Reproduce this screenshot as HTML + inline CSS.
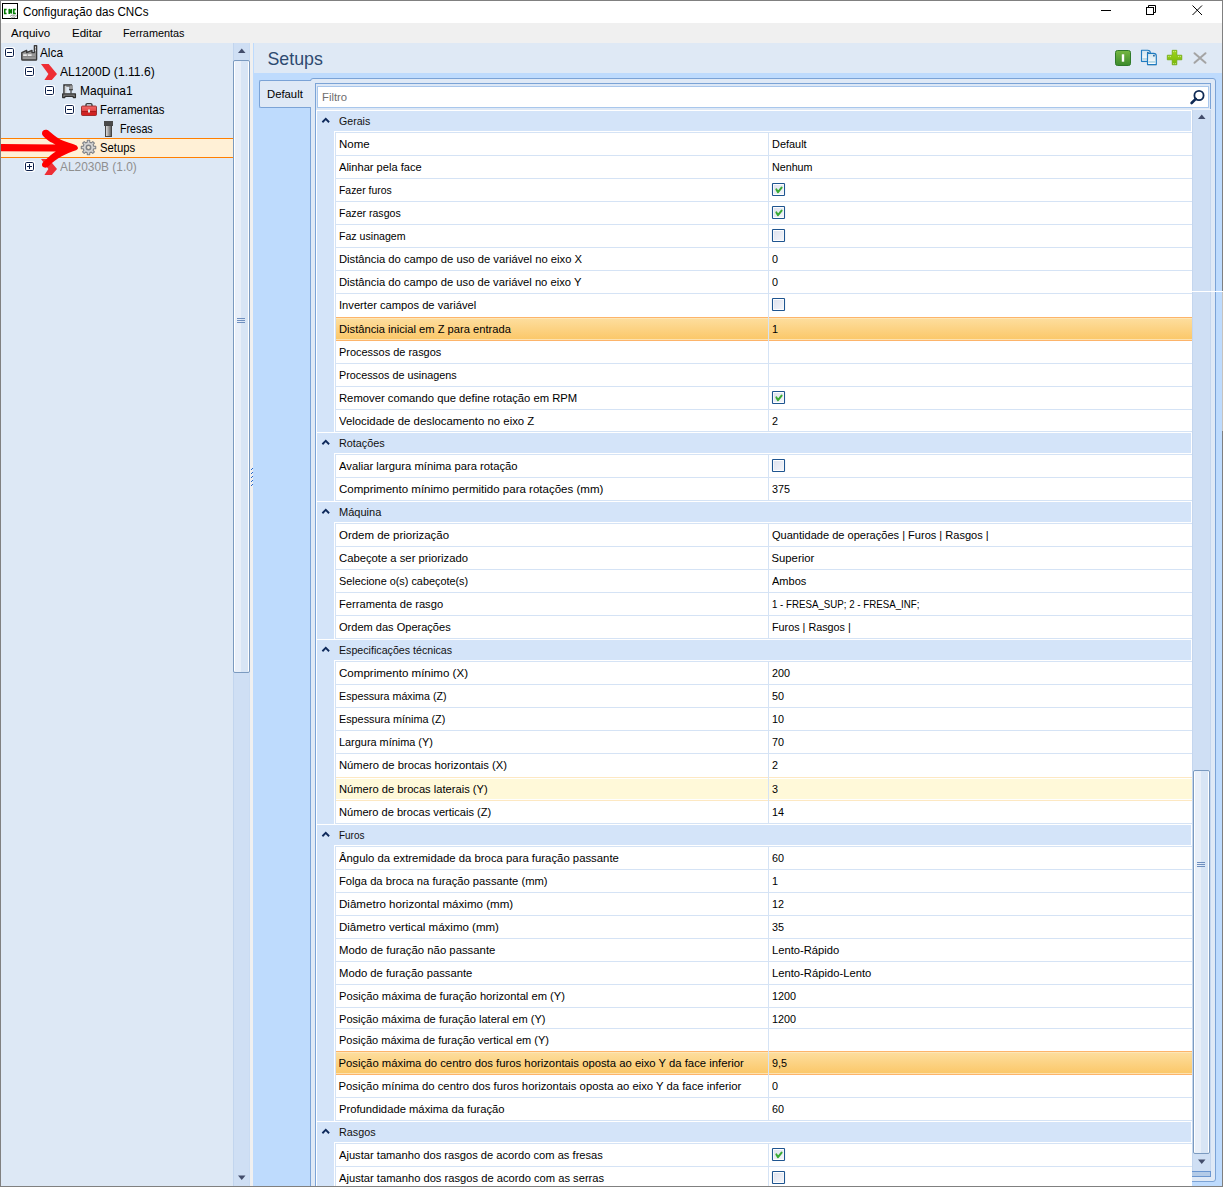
<!DOCTYPE html><html><head><meta charset="utf-8"><title>Configuração das CNCs</title><style>
html,body{margin:0;padding:0;} body{width:1223px;height:1187px;overflow:hidden;position:relative;background:#f0f0f0;font-family:"Liberation Sans", sans-serif;} div{box-sizing:border-box;} svg{position:absolute;overflow:visible}
</style></head><body>
<div style="position:absolute;left:0px;top:0px;width:1223px;height:1187px;background:#808080"></div>
<div style="position:absolute;left:1px;top:1px;width:1221px;height:22px;background:#ffffff"></div>
<div style="position:absolute;left:1px;top:23px;width:1221px;height:20px;background:#f0f0f0"></div>
<div style="position:absolute;left:1px;top:43px;width:232px;height:1143px;background:#dde8f5"></div>
<div style="position:absolute;left:233px;top:43px;width:17px;height:1143px;background:#cfdff4;border-left:1px solid #c2d5ee;border-right:1px solid #c9dbf2"></div>
<div style="position:absolute;left:250px;top:43px;width:3px;height:1143px;background:#f0f0f0"></div>
<div style="position:absolute;left:253px;top:43px;width:969px;height:1143px;background:#bedbfd"></div>
<div style="position:absolute;left:254px;top:43px;width:968px;height:30px;background:#dfe9f5"></div>
<svg style="left:2px;top:3px" width="16" height="16" viewBox="0 0 16 16">
<rect x="0.5" y="0.5" width="15" height="15" fill="#fff" stroke="#000" stroke-width="1"/>
<path d="M4.6 6.6 H2.7 V10.4 H4.6 M7.2 10.9 V6.1 L9.4 10.4 V6.1 M13.8 6.6 H11.8 V10.4 H13.8" fill="none" stroke="#007800" stroke-width="1.5"/>
<path d="M8 13.5 Q10 11 12 12.5 T15 12.5 M9 15 Q11 13 13 14.5" fill="none" stroke="#a0a0a0" stroke-width="1"/>
</svg>
<div style="position:absolute;left:23px;top:5.87px;font-size:12.3px;line-height:13.739px;color:#000;white-space:nowrap;transform:scaleX(0.9461);transform-origin:0 0;">Configuração das CNCs</div>
<svg style="left:1101px;top:10px" width="10" height="1"><rect x="0" y="0" width="10" height="1" fill="#000"/></svg>
<svg style="left:1146px;top:5px" width="11" height="11" viewBox="0 0 11 11">
<rect x="0.5" y="2.5" width="7" height="7" fill="none" stroke="#000"/>
<path d="M2.5 2.5 V0.5 H9.5 V7.5 H7.5" fill="none" stroke="#000"/></svg>
<svg style="left:1192px;top:5px" width="11" height="11" viewBox="0 0 11 11">
<path d="M0.5 0.5 L10 10 M10 0.5 L0.5 10" stroke="#000" stroke-width="1"/></svg>
<div style="position:absolute;left:11px;top:26.77px;font-size:11.3px;line-height:12.622px;color:#000;white-space:nowrap;transform:scaleX(1.0214);transform-origin:0 0;">Arquivo</div>
<div style="position:absolute;left:72px;top:26.77px;font-size:11.3px;line-height:12.622px;color:#000;white-space:nowrap;transform:scaleX(1.0214);transform-origin:0 0;">Editar</div>
<div style="position:absolute;left:123px;top:26.77px;font-size:11.3px;line-height:12.622px;color:#000;white-space:nowrap;transform:scaleX(0.9595);transform-origin:0 0;">Ferramentas</div>
<div style="position:absolute;left:1px;top:138px;width:232px;height:20px;background:#fff0d6;border-top:1px solid #ff7f00;border-bottom:1px solid #ff7f00"></div>
<svg style="left:4px;top:47px" width="11" height="11" viewBox="0 0 11 11">
<rect x="0" y="0" width="11" height="11" rx="2" fill="#ffffff"/>
<rect x="1.5" y="1.5" width="8" height="8" rx="1.2" fill="#ffffff" stroke="#0c1f4a" stroke-width="1"/>
<path d="M3 5.5 H8" stroke="#0c1f4a" stroke-width="1"/>
</svg>
<svg style="left:21px;top:45px" width="17" height="16" viewBox="0 0 17 16">
<path d="M0.8 14.2 V7.6 L5.6 5.4 V7.6 L11 5.4 V7.6 H13.4 V0.6 H15.6 V14.2 Q15.6 15 14.8 15 H1.6 Q0.8 15 0.8 14.2 Z" fill="#999" stroke="#3a3a3a" stroke-width="1.4" stroke-linejoin="round"/>
<rect x="2.2" y="9.4" width="3.6" height="1.4" fill="#fff"/><rect x="6.8" y="9.4" width="3.8" height="1.4" fill="#fff"/>
<rect x="2" y="11.2" width="12" height="1" fill="#808080"/>
<rect x="14.1" y="1.6" width="0.9" height="1.8" fill="#ddd"/><rect x="14.1" y="4.4" width="0.9" height="1.8" fill="#ddd"/>
</svg>
<div style="position:absolute;left:40px;top:46.96px;font-size:12.2px;line-height:13.627px;color:#000;white-space:nowrap;transform:scaleX(0.9683);transform-origin:0 0;">Alca</div>
<svg style="left:24px;top:66px" width="11" height="11" viewBox="0 0 11 11">
<rect x="0" y="0" width="11" height="11" rx="2" fill="#ffffff"/>
<rect x="1.5" y="1.5" width="8" height="8" rx="1.2" fill="#ffffff" stroke="#0c1f4a" stroke-width="1"/>
<path d="M3 5.5 H8" stroke="#0c1f4a" stroke-width="1"/>
</svg>
<svg style="left:41px;top:64px" width="17" height="17" viewBox="0 0 17 17">
<path d="M0 0 H7.7 L16 10 L10.8 16 H3.4 L7.4 10 Z" fill="#ee2e35"/></svg>
<div style="position:absolute;left:60px;top:65.96px;font-size:12.2px;line-height:13.627px;color:#000;white-space:nowrap;transform:scaleX(0.9937);transform-origin:0 0;">AL1200D (1.11.6)</div>
<svg style="left:44px;top:85px" width="11" height="11" viewBox="0 0 11 11">
<rect x="0" y="0" width="11" height="11" rx="2" fill="#ffffff"/>
<rect x="1.5" y="1.5" width="8" height="8" rx="1.2" fill="#ffffff" stroke="#0c1f4a" stroke-width="1"/>
<path d="M3 5.5 H8" stroke="#0c1f4a" stroke-width="1"/>
</svg>
<svg style="left:62px;top:84px" width="15" height="15" viewBox="0 0 15 15">
<path d="M2 9.5 V1 H10" fill="none" stroke="#2f2f2f" stroke-width="1.5"/>
<rect x="2.8" y="1.8" width="1.6" height="7.6" fill="#cfcfcf"/>
<rect x="4.3" y="1.8" width="3.5" height="1.2" fill="#888"/>
<rect x="7.6" y="1.2" width="2.8" height="4.2" fill="#999" stroke="#555" stroke-width="0.4"/>
<path d="M7 5.7 H11 M9 5.7 V9.5" stroke="#2f2f2f" stroke-width="1.1"/>
<path d="M0.7 13.6 V9.9 H13.4 V13.6 H11.4 L10.9 12.3 H3.2 L2.7 13.6 Z" fill="#7f7f7f" stroke="#2f2f2f" stroke-width="1.3" stroke-linejoin="round"/>
</svg>
<div style="position:absolute;left:80px;top:84.96px;font-size:12.2px;line-height:13.627px;color:#000;white-space:nowrap;transform:scaleX(0.9829);transform-origin:0 0;">Maquina1</div>
<svg style="left:64px;top:104px" width="11" height="11" viewBox="0 0 11 11">
<rect x="0" y="0" width="11" height="11" rx="2" fill="#ffffff"/>
<rect x="1.5" y="1.5" width="8" height="8" rx="1.2" fill="#ffffff" stroke="#0c1f4a" stroke-width="1"/>
<path d="M3 5.5 H8" stroke="#0c1f4a" stroke-width="1"/>
</svg>
<svg style="left:81px;top:103px" width="16" height="13" viewBox="0 0 16 13">
<defs><linearGradient id="tbg" x1="0" y1="0" x2="0" y2="1"><stop offset="0" stop-color="#f26a6a"/><stop offset="0.5" stop-color="#e44848"/><stop offset="0.55" stop-color="#a81010"/><stop offset="0.65" stop-color="#c42828"/><stop offset="1" stop-color="#e11a1a"/></linearGradient></defs>
<path d="M5 3.5 V1.8 Q5 0.7 6.2 0.7 H9.8 Q11 0.7 11 1.8 V3.5" fill="none" stroke="#3a3a3a" stroke-width="1.3"/>
<rect x="0.5" y="3" width="15" height="9.5" rx="1" fill="url(#tbg)" stroke="#8a1a1a" stroke-width="0.8"/>
<rect x="7" y="6.5" width="2" height="3" fill="#dfe8e8"/>
</svg>
<div style="position:absolute;left:100px;top:103.96px;font-size:12.2px;line-height:13.627px;color:#000;white-space:nowrap;transform:scaleX(0.9321);transform-origin:0 0;">Ferramentas</div>
<svg style="left:104px;top:121px" width="9" height="16" viewBox="0 0 9 16">
<defs><linearGradient id="frg" x1="0" y1="0" x2="1" y2="0"><stop offset="0" stop-color="#e8e8e8"/><stop offset="1" stop-color="#555"/></linearGradient></defs>
<rect x="0" y="0" width="9" height="5" fill="#4a4a4a"/>
<rect x="1.5" y="4.5" width="6" height="11" fill="url(#frg)" stroke="#444" stroke-width="1"/>
</svg>
<div style="position:absolute;left:120px;top:122.96px;font-size:12.2px;line-height:13.627px;color:#000;white-space:nowrap;transform:scaleX(0.8775);transform-origin:0 0;">Fresas</div>
<svg style="left:81px;top:140px" width="15" height="15" viewBox="0 0 15 15">
<path d="M6.22 2.25 L6.34 0.29 L8.66 0.29 L8.78 2.25 L10.30 2.88 L11.77 1.58 L13.42 3.23 L12.12 4.70 L12.75 6.22 L14.71 6.34 L14.71 8.66 L12.75 8.78 L12.12 10.30 L13.42 11.77 L11.77 13.42 L10.30 12.12 L8.78 12.75 L8.66 14.71 L6.34 14.71 L6.22 12.75 L4.70 12.12 L3.23 13.42 L1.58 11.77 L2.88 10.30 L2.25 8.78 L0.29 8.66 L0.29 6.34 L2.25 6.22 L2.88 4.70 L1.58 3.23 L3.23 1.58 L4.70 2.88 Z" fill="#d4d4d4" stroke="#7f8287" stroke-width="1.1" stroke-linejoin="round"/>
<circle cx="7.5" cy="7.5" r="2.2" fill="#efe7d7" stroke="#808387" stroke-width="1.5"/>
</svg>
<div style="position:absolute;left:100px;top:141.96px;font-size:12.2px;line-height:13.627px;color:#000;white-space:nowrap;transform:scaleX(0.9262);transform-origin:0 0;">Setups</div>
<svg style="left:24px;top:161px" width="11" height="11" viewBox="0 0 11 11">
<rect x="0" y="0" width="11" height="11" rx="2" fill="#ffffff"/>
<rect x="1.5" y="1.5" width="8" height="8" rx="1.2" fill="#ffffff" stroke="#0c1f4a" stroke-width="1"/>
<path d="M3 5.5 H8" stroke="#0c1f4a" stroke-width="1"/><path d="M5.5 3 V8" stroke="#0c1f4a" stroke-width="1"/>
</svg>
<svg style="left:41px;top:159px" width="17" height="17" viewBox="0 0 17 17">
<path d="M0 0 H7.7 L16 10 L10.8 16 H3.4 L7.4 10 Z" fill="#ee2e35"/></svg>
<div style="position:absolute;left:60px;top:160.96px;font-size:12.2px;line-height:13.627px;color:#8f8f8f;white-space:nowrap;transform:scaleX(0.9777);transform-origin:0 0;">AL2030B (1.0)</div>
<svg style="left:0px;top:0px" width="100" height="200" viewBox="0 0 100 200">
<path d="M78 147.9 C77.6 146.3 76.8 145.6 75.9 145.2 C70 142.8 63 141 59.5 139 C55 136.5 52 133.5 49.2 131.2 C46.8 129 42.6 129.3 42.1 132.6 C41.8 134.3 42.3 135.2 43.2 136 C45 138 47 139.8 48.5 140.7 C51 142.3 53.5 143.5 55.5 144.5 L1 143.9 L1 151.3 L55.8 151.5 C52 154 49.5 156.2 47.3 158.3 C45.5 160 44 161.5 42.6 162.8 C41.4 164.2 41.8 166.8 44.3 167.6 C46 168.1 47.5 167.3 48.7 166.1 C52.5 162.5 57 159 61.2 156.6 C66 153.8 71 151.8 76 150.2 C77.3 149.6 77.8 148.9 78 147.9 Z" fill="#ff0000"/>
</svg>
<svg style="left:238px;top:48px" width="8" height="6" viewBox="0 0 8 6"><path d="M0 5 L3.75 0.5 L7.5 5 Z" fill="#434d6b"/></svg>
<div style="position:absolute;left:233px;top:60px;width:17px;height:613px;border:1px solid #7b9abf;border-radius:2px;background:linear-gradient(90deg,#ffffff 0,#ffffff 1px,#e8eff9 1px,#e8eff9 7px,#d8e5f5 7px,#d8e5f5 14px,#ffffff 14px)"></div>
<div style="position:absolute;left:237px;top:318px;width:8px;height:1px;background:#6f8fbf"></div>
<div style="position:absolute;left:237px;top:320px;width:8px;height:1px;background:#6f8fbf"></div>
<div style="position:absolute;left:237px;top:322px;width:8px;height:1px;background:#6f8fbf"></div>
<svg style="left:238px;top:1175px" width="8" height="6" viewBox="0 0 8 6"><path d="M0 0.5 L3.75 5 L7.5 0.5 Z" fill="#434d6b"/></svg>
<div style="position:absolute;left:252px;top:468px;width:1px;height:1px;background:#2266cc"></div>
<div style="position:absolute;left:251px;top:469px;width:1px;height:1px;background:#2266cc"></div>
<div style="position:absolute;left:252px;top:472px;width:1px;height:1px;background:#2266cc"></div>
<div style="position:absolute;left:251px;top:473px;width:1px;height:1px;background:#2266cc"></div>
<div style="position:absolute;left:252px;top:476px;width:1px;height:1px;background:#2266cc"></div>
<div style="position:absolute;left:251px;top:477px;width:1px;height:1px;background:#2266cc"></div>
<div style="position:absolute;left:252px;top:480px;width:1px;height:1px;background:#2266cc"></div>
<div style="position:absolute;left:251px;top:481px;width:1px;height:1px;background:#2266cc"></div>
<div style="position:absolute;left:252px;top:484px;width:1px;height:1px;background:#2266cc"></div>
<div style="position:absolute;left:251px;top:485px;width:1px;height:1px;background:#2266cc"></div>
<svg style="left:1115px;top:50px" width="16" height="16" viewBox="0 0 16 16">
<defs><linearGradient id="gbtn" x1="0" y1="0" x2="0" y2="1"><stop offset="0" stop-color="#76b843"/><stop offset="1" stop-color="#3b8a2c"/></linearGradient></defs>
<rect x="0.5" y="0.5" width="15" height="15" rx="2" fill="url(#gbtn)" stroke="#2f7a2a" stroke-width="1"/>
<rect x="6.8" y="4.3" width="2.4" height="7.4" fill="#ffffff"/></svg>
<svg style="left:1140px;top:49px" width="18" height="18" viewBox="0 0 18 18">
<defs><linearGradient id="cpg" x1="0" y1="0" x2="0" y2="1"><stop offset="0" stop-color="#cfe4ee"/><stop offset="1" stop-color="#ffffff"/></linearGradient></defs>
<path d="M1.5 12.8 V1.2 H7.6 Q10.3 1.2 10.3 3.9 V12.8 Z" fill="#bbb" opacity="0.35" transform="translate(0.4,0.7)"/>
<path d="M1.5 12.3 V1.2 H7.6 Q10.3 1.2 10.3 3.9 V12.3 Z" fill="url(#cpg)" stroke="#1f7bc0" stroke-width="1.15" stroke-linejoin="round"/>
<rect x="2.3" y="9.2" width="7.2" height="1.5" fill="#a9d1e2"/>
<circle cx="7.9" cy="3.6" r="0.9" fill="#1f5f9a"/>
<path d="M7.5 16.3 V4.3 H13.6 Q16.3 4.3 16.3 7 V16.3 Z" fill="#bbb" opacity="0.35" transform="translate(0.3,0.6)"/>
<path d="M7.5 15.6 V4.3 H13.6 Q16.3 4.3 16.3 7 V15.6 Z" fill="url(#cpg)" stroke="#1f7bc0" stroke-width="1.15" stroke-linejoin="round"/>
<rect x="8.3" y="12.2" width="7.2" height="1.5" fill="#a9d1e2"/>
<circle cx="13.9" cy="6.7" r="0.9" fill="#1f5f9a"/>
</svg>
<svg style="left:1167px;top:50px" width="16" height="16" viewBox="0 0 16 16">
<defs><linearGradient id="plg" x1="0" y1="0" x2="0" y2="1"><stop offset="0" stop-color="#9fd41a"/><stop offset="1" stop-color="#78b80a"/></linearGradient></defs>
<path d="M5.2 0.3 H9.8 V5.2 H14.8 V9.8 H9.8 V14.8 H5.2 V9.8 H0.3 V5.2 H5.2 Z" fill="url(#plg)" stroke="#6aa60a" stroke-width="0.7" stroke-linejoin="round"/>
<path d="M6.2 1.6 H8.8 M6.2 13.6 H8.8" stroke="#e4f7b8" stroke-width="0.8" stroke-dasharray="1 0.8"/>
<path d="M1.3 6.6 H4 M11 6.6 H13.8" stroke="#e4f7b8" stroke-width="0.8" stroke-dasharray="1 0.8"/>
</svg>
<svg style="left:1193px;top:52px" width="14" height="12" viewBox="0 0 14 12">
<path d="M1.5 1.2 L12.5 10.8 M12.5 1.2 L1.5 10.8" stroke="#a4a4a4" stroke-width="2" stroke-linecap="round"/></svg>
<div style="position:absolute;left:267.5px;top:49.89px;font-size:17.8px;line-height:19.883px;color:#2e4a70;white-space:nowrap;">Setups</div>
<div style="position:absolute;left:310px;top:78px;width:906px;height:1104px;background:#dfe9f6;border:1px solid #7ba3d6;border-radius:3px 3px 3px 0"></div>
<div style="position:absolute;left:310px;top:1170px;width:6px;height:16px;background:#dfe9f6;border-left:1px solid #7ba3d6"></div>
<div style="position:absolute;left:259px;top:80px;width:52px;height:28px;background:#dfe9f6;border:1px solid #7ba3d6;border-right:none;border-radius:2px 0 0 2px"></div>
<div style="position:absolute;left:310px;top:81px;width:2px;height:26px;background:#dfe9f6"></div>
<div style="position:absolute;left:267px;top:87.77px;font-size:11.3px;line-height:12.622px;color:#000;white-space:nowrap;">Default</div>
<div style="position:absolute;left:315px;top:83px;width:896px;height:26px;border:1px solid #7ba3d6;border-bottom:none;background:#dde8f6"></div>
<div style="position:absolute;left:315px;top:83px;width:1px;height:1103px;background:#7ba3d6"></div>
<div style="position:absolute;left:317px;top:86px;width:892px;height:22px;background:#fff;border:1px solid #a9c7ec"></div>
<div style="position:absolute;left:322px;top:90.77px;font-size:11.3px;line-height:12.622px;color:#6e6e6e;white-space:nowrap;">Filtro</div>
<svg style="left:1189px;top:89px" width="17" height="17" viewBox="0 0 17 17">
<circle cx="10" cy="6.5" r="4.6" fill="none" stroke="#0f2a55" stroke-width="1.8"/>
<path d="M6.8 9.8 L2.6 14" stroke="#0f2a55" stroke-width="2.6" stroke-linecap="round"/></svg>
<div style="position:absolute;left:316px;top:110px;width:876px;height:1076px;background:#ffffff"></div>
<div style="position:absolute;left:317px;top:110px;width:17px;height:1076px;background:#d4e4f9"></div>
<div style="position:absolute;left:316px;top:110px;width:876px;height:1px;background:#ffffff"></div>
<div style="position:absolute;left:317px;top:111px;width:874px;height:20px;background:#d4e4f9"></div>
<svg style="left:322px;top:117px" width="8" height="6" viewBox="0 0 8 6"><path d="M0.4 5.2 L3.75 1.9 L7.1 5.2" fill="none" stroke="#0f2a5c" stroke-width="1.9" stroke-linecap="butt" stroke-linejoin="miter"/></svg>
<div style="position:absolute;left:338.5px;top:114.77px;font-size:11.3px;line-height:12.622px;color:#111;white-space:nowrap;transform:scaleX(0.9387);transform-origin:0 0;">Gerais</div>
<div style="position:absolute;left:335px;top:132px;width:857px;height:1px;background:#d5e3f5"></div>
<div style="position:absolute;left:335px;top:132px;width:1px;height:24px;background:#d5e3f5"></div>
<div style="position:absolute;left:768px;top:132px;width:1px;height:23px;background:#d5e3f5"></div>
<div style="position:absolute;left:338.5px;top:137.77px;font-size:11.3px;line-height:12.622px;color:#000;white-space:nowrap;transform:scaleX(1.0170);transform-origin:0 0;">Nome</div>
<div style="position:absolute;left:771.5px;top:137.77px;font-size:11.3px;line-height:12.622px;color:#000;white-space:nowrap;transform:scaleX(0.9666);transform-origin:0 0;">Default</div>
<div style="position:absolute;left:335px;top:155px;width:857px;height:1px;background:#d5e3f5"></div>
<div style="position:absolute;left:335px;top:155px;width:1px;height:24px;background:#d5e3f5"></div>
<div style="position:absolute;left:768px;top:155px;width:1px;height:23px;background:#d5e3f5"></div>
<div style="position:absolute;left:338.5px;top:160.77px;font-size:11.3px;line-height:12.622px;color:#000;white-space:nowrap;transform:scaleX(0.9820);transform-origin:0 0;">Alinhar pela face</div>
<div style="position:absolute;left:771.5px;top:160.77px;font-size:11.3px;line-height:12.622px;color:#000;white-space:nowrap;transform:scaleX(0.9479);transform-origin:0 0;">Nenhum</div>
<div style="position:absolute;left:335px;top:178px;width:857px;height:1px;background:#d5e3f5"></div>
<div style="position:absolute;left:335px;top:178px;width:1px;height:24px;background:#d5e3f5"></div>
<div style="position:absolute;left:768px;top:178px;width:1px;height:23px;background:#d5e3f5"></div>
<div style="position:absolute;left:338.5px;top:183.77px;font-size:11.3px;line-height:12.622px;color:#000;white-space:nowrap;transform:scaleX(0.9223);transform-origin:0 0;">Fazer furos</div>
<svg style="left:772px;top:183px" width="13" height="13" viewBox="0 0 13 13">
<defs><linearGradient id="cbg772183" x1="0" y1="0" x2="1" y2="1"><stop offset="0" stop-color="#dfe3ee"/><stop offset="1" stop-color="#f3f4f9"/></linearGradient></defs>
<rect x="0.5" y="0.5" width="12" height="12" rx="0.6" fill="#ffffff" stroke="#1f5590" stroke-width="1.1"/>
<rect x="2" y="2" width="9" height="9" fill="url(#cbg772183)"/>
<path d="M4.4 6.4 L6 9.2 L9.6 4.6" fill="none" stroke="#3aaa35" stroke-width="2" stroke-linecap="round" stroke-linejoin="round"/></svg>
<div style="position:absolute;left:335px;top:201px;width:857px;height:1px;background:#d5e3f5"></div>
<div style="position:absolute;left:335px;top:201px;width:1px;height:24px;background:#d5e3f5"></div>
<div style="position:absolute;left:768px;top:201px;width:1px;height:23px;background:#d5e3f5"></div>
<div style="position:absolute;left:338.5px;top:206.77px;font-size:11.3px;line-height:12.622px;color:#000;white-space:nowrap;transform:scaleX(0.9360);transform-origin:0 0;">Fazer rasgos</div>
<svg style="left:772px;top:206px" width="13" height="13" viewBox="0 0 13 13">
<defs><linearGradient id="cbg772206" x1="0" y1="0" x2="1" y2="1"><stop offset="0" stop-color="#dfe3ee"/><stop offset="1" stop-color="#f3f4f9"/></linearGradient></defs>
<rect x="0.5" y="0.5" width="12" height="12" rx="0.6" fill="#ffffff" stroke="#1f5590" stroke-width="1.1"/>
<rect x="2" y="2" width="9" height="9" fill="url(#cbg772206)"/>
<path d="M4.4 6.4 L6 9.2 L9.6 4.6" fill="none" stroke="#3aaa35" stroke-width="2" stroke-linecap="round" stroke-linejoin="round"/></svg>
<div style="position:absolute;left:335px;top:224px;width:857px;height:1px;background:#d5e3f5"></div>
<div style="position:absolute;left:335px;top:224px;width:1px;height:24px;background:#d5e3f5"></div>
<div style="position:absolute;left:768px;top:224px;width:1px;height:23px;background:#d5e3f5"></div>
<div style="position:absolute;left:338.5px;top:229.77px;font-size:11.3px;line-height:12.622px;color:#000;white-space:nowrap;transform:scaleX(0.9377);transform-origin:0 0;">Faz usinagem</div>
<svg style="left:772px;top:229px" width="13" height="13" viewBox="0 0 13 13">
<defs><linearGradient id="cbg772229" x1="0" y1="0" x2="1" y2="1"><stop offset="0" stop-color="#dfe3ee"/><stop offset="1" stop-color="#f3f4f9"/></linearGradient></defs>
<rect x="0.5" y="0.5" width="12" height="12" rx="0.6" fill="#ffffff" stroke="#1f5590" stroke-width="1.1"/>
<rect x="2" y="2" width="9" height="9" fill="url(#cbg772229)"/>
</svg>
<div style="position:absolute;left:335px;top:247px;width:857px;height:1px;background:#d5e3f5"></div>
<div style="position:absolute;left:335px;top:247px;width:1px;height:24px;background:#d5e3f5"></div>
<div style="position:absolute;left:768px;top:247px;width:1px;height:23px;background:#d5e3f5"></div>
<div style="position:absolute;left:338.5px;top:252.77px;font-size:11.3px;line-height:12.622px;color:#000;white-space:nowrap;transform:scaleX(0.9951);transform-origin:0 0;">Distância do campo de uso de variável no eixo X</div>
<div style="position:absolute;left:771.5px;top:252.77px;font-size:11.3px;line-height:12.622px;color:#000;white-space:nowrap;transform:scaleX(0.9550);transform-origin:0 0;">0</div>
<div style="position:absolute;left:335px;top:270px;width:857px;height:1px;background:#d5e3f5"></div>
<div style="position:absolute;left:335px;top:270px;width:1px;height:24px;background:#d5e3f5"></div>
<div style="position:absolute;left:768px;top:270px;width:1px;height:23px;background:#d5e3f5"></div>
<div style="position:absolute;left:338.5px;top:275.77px;font-size:11.3px;line-height:12.622px;color:#000;white-space:nowrap;transform:scaleX(0.9934);transform-origin:0 0;">Distância do campo de uso de variável no eixo Y</div>
<div style="position:absolute;left:771.5px;top:275.77px;font-size:11.3px;line-height:12.622px;color:#000;white-space:nowrap;transform:scaleX(0.9550);transform-origin:0 0;">0</div>
<div style="position:absolute;left:335px;top:293px;width:857px;height:1px;background:#d5e3f5"></div>
<div style="position:absolute;left:335px;top:293px;width:1px;height:25px;background:#d5e3f5"></div>
<div style="position:absolute;left:768px;top:293px;width:1px;height:24px;background:#d5e3f5"></div>
<div style="position:absolute;left:338.5px;top:298.77px;font-size:11.3px;line-height:12.622px;color:#000;white-space:nowrap;transform:scaleX(0.9884);transform-origin:0 0;">Inverter campos de variável</div>
<svg style="left:772px;top:298px" width="13" height="13" viewBox="0 0 13 13">
<defs><linearGradient id="cbg772298" x1="0" y1="0" x2="1" y2="1"><stop offset="0" stop-color="#dfe3ee"/><stop offset="1" stop-color="#f3f4f9"/></linearGradient></defs>
<rect x="0.5" y="0.5" width="12" height="12" rx="0.6" fill="#ffffff" stroke="#1f5590" stroke-width="1.1"/>
<rect x="2" y="2" width="9" height="9" fill="url(#cbg772298)"/>
</svg>
<div style="position:absolute;left:336px;top:317px;width:856px;height:24px;background:linear-gradient(#fdb46a 0,#fdb46a 1px,#fde6b6 1px,#fde6b6 2px,#fddd9c 2px,#fbc86a calc(100% - 2px),#fde2b0 calc(100% - 2px),#fde2b0 calc(100% - 1px),#fdb46a calc(100% - 1px))"></div>
<div style="position:absolute;left:335px;top:317px;width:1px;height:24px;background:#d5e3f5"></div>
<div style="position:absolute;left:768px;top:317px;width:1px;height:23px;background:#d5e3f5"></div>
<div style="position:absolute;left:338.5px;top:322.77px;font-size:11.3px;line-height:12.622px;color:#000;white-space:nowrap;transform:scaleX(0.9885);transform-origin:0 0;">Distância inicial em Z para entrada</div>
<div style="position:absolute;left:771.5px;top:322.77px;font-size:11.3px;line-height:12.622px;color:#000;white-space:nowrap;transform:scaleX(0.9550);transform-origin:0 0;">1</div>
<div style="position:absolute;left:335px;top:340px;width:1px;height:24px;background:#d5e3f5"></div>
<div style="position:absolute;left:768px;top:340px;width:1px;height:23px;background:#d5e3f5"></div>
<div style="position:absolute;left:338.5px;top:345.77px;font-size:11.3px;line-height:12.622px;color:#000;white-space:nowrap;transform:scaleX(0.9694);transform-origin:0 0;">Processos de rasgos</div>
<div style="position:absolute;left:335px;top:363px;width:857px;height:1px;background:#d5e3f5"></div>
<div style="position:absolute;left:335px;top:363px;width:1px;height:24px;background:#d5e3f5"></div>
<div style="position:absolute;left:768px;top:363px;width:1px;height:23px;background:#d5e3f5"></div>
<div style="position:absolute;left:338.5px;top:368.77px;font-size:11.3px;line-height:12.622px;color:#000;white-space:nowrap;transform:scaleX(0.9560);transform-origin:0 0;">Processos de usinagens</div>
<div style="position:absolute;left:335px;top:386px;width:857px;height:1px;background:#d5e3f5"></div>
<div style="position:absolute;left:335px;top:386px;width:1px;height:24px;background:#d5e3f5"></div>
<div style="position:absolute;left:768px;top:386px;width:1px;height:23px;background:#d5e3f5"></div>
<div style="position:absolute;left:338.5px;top:391.77px;font-size:11.3px;line-height:12.622px;color:#000;white-space:nowrap;transform:scaleX(0.9958);transform-origin:0 0;">Remover comando que define rotação em RPM</div>
<svg style="left:772px;top:391px" width="13" height="13" viewBox="0 0 13 13">
<defs><linearGradient id="cbg772391" x1="0" y1="0" x2="1" y2="1"><stop offset="0" stop-color="#dfe3ee"/><stop offset="1" stop-color="#f3f4f9"/></linearGradient></defs>
<rect x="0.5" y="0.5" width="12" height="12" rx="0.6" fill="#ffffff" stroke="#1f5590" stroke-width="1.1"/>
<rect x="2" y="2" width="9" height="9" fill="url(#cbg772391)"/>
<path d="M4.4 6.4 L6 9.2 L9.6 4.6" fill="none" stroke="#3aaa35" stroke-width="2" stroke-linecap="round" stroke-linejoin="round"/></svg>
<div style="position:absolute;left:335px;top:409px;width:857px;height:1px;background:#d5e3f5"></div>
<div style="position:absolute;left:335px;top:409px;width:1px;height:23px;background:#d5e3f5"></div>
<div style="position:absolute;left:768px;top:409px;width:1px;height:22px;background:#d5e3f5"></div>
<div style="position:absolute;left:338.5px;top:414.77px;font-size:11.3px;line-height:12.622px;color:#000;white-space:nowrap;transform:scaleX(1.0062);transform-origin:0 0;">Velocidade de deslocamento no eixo Z</div>
<div style="position:absolute;left:771.5px;top:414.77px;font-size:11.3px;line-height:12.622px;color:#000;white-space:nowrap;transform:scaleX(0.9550);transform-origin:0 0;">2</div>
<div style="position:absolute;left:335px;top:431px;width:857px;height:1px;background:#d5e3f5"></div>
<div style="position:absolute;left:316px;top:432px;width:876px;height:1px;background:#ffffff"></div>
<div style="position:absolute;left:317px;top:433px;width:874px;height:20px;background:#d4e4f9"></div>
<svg style="left:322px;top:439px" width="8" height="6" viewBox="0 0 8 6"><path d="M0.4 5.2 L3.75 1.9 L7.1 5.2" fill="none" stroke="#0f2a5c" stroke-width="1.9" stroke-linecap="butt" stroke-linejoin="miter"/></svg>
<div style="position:absolute;left:338.5px;top:436.77px;font-size:11.3px;line-height:12.622px;color:#111;white-space:nowrap;transform:scaleX(0.9580);transform-origin:0 0;">Rotações</div>
<div style="position:absolute;left:335px;top:454px;width:857px;height:1px;background:#d5e3f5"></div>
<div style="position:absolute;left:335px;top:454px;width:1px;height:24px;background:#d5e3f5"></div>
<div style="position:absolute;left:768px;top:454px;width:1px;height:23px;background:#d5e3f5"></div>
<div style="position:absolute;left:338.5px;top:459.77px;font-size:11.3px;line-height:12.622px;color:#000;white-space:nowrap;transform:scaleX(0.9956);transform-origin:0 0;">Avaliar largura mínima para rotação</div>
<svg style="left:772px;top:459px" width="13" height="13" viewBox="0 0 13 13">
<defs><linearGradient id="cbg772459" x1="0" y1="0" x2="1" y2="1"><stop offset="0" stop-color="#dfe3ee"/><stop offset="1" stop-color="#f3f4f9"/></linearGradient></defs>
<rect x="0.5" y="0.5" width="12" height="12" rx="0.6" fill="#ffffff" stroke="#1f5590" stroke-width="1.1"/>
<rect x="2" y="2" width="9" height="9" fill="url(#cbg772459)"/>
</svg>
<div style="position:absolute;left:335px;top:477px;width:857px;height:1px;background:#d5e3f5"></div>
<div style="position:absolute;left:335px;top:477px;width:1px;height:24px;background:#d5e3f5"></div>
<div style="position:absolute;left:768px;top:477px;width:1px;height:23px;background:#d5e3f5"></div>
<div style="position:absolute;left:338.5px;top:482.77px;font-size:11.3px;line-height:12.622px;color:#000;white-space:nowrap;transform:scaleX(1.0194);transform-origin:0 0;">Comprimento mínimo permitido para rotações (mm)</div>
<div style="position:absolute;left:771.5px;top:482.77px;font-size:11.3px;line-height:12.622px;color:#000;white-space:nowrap;transform:scaleX(0.9550);transform-origin:0 0;">375</div>
<div style="position:absolute;left:335px;top:500px;width:857px;height:1px;background:#d5e3f5"></div>
<div style="position:absolute;left:316px;top:501px;width:876px;height:1px;background:#ffffff"></div>
<div style="position:absolute;left:317px;top:502px;width:874px;height:20px;background:#d4e4f9"></div>
<svg style="left:322px;top:508px" width="8" height="6" viewBox="0 0 8 6"><path d="M0.4 5.2 L3.75 1.9 L7.1 5.2" fill="none" stroke="#0f2a5c" stroke-width="1.9" stroke-linecap="butt" stroke-linejoin="miter"/></svg>
<div style="position:absolute;left:338.5px;top:505.77px;font-size:11.3px;line-height:12.622px;color:#111;white-space:nowrap;transform:scaleX(0.9771);transform-origin:0 0;">Máquina</div>
<div style="position:absolute;left:335px;top:523px;width:857px;height:1px;background:#d5e3f5"></div>
<div style="position:absolute;left:335px;top:523px;width:1px;height:24px;background:#d5e3f5"></div>
<div style="position:absolute;left:768px;top:523px;width:1px;height:23px;background:#d5e3f5"></div>
<div style="position:absolute;left:338.5px;top:528.77px;font-size:11.3px;line-height:12.622px;color:#000;white-space:nowrap;transform:scaleX(1.0129);transform-origin:0 0;">Ordem de priorização</div>
<div style="position:absolute;left:771.5px;top:528.77px;font-size:11.3px;line-height:12.622px;color:#000;white-space:nowrap;transform:scaleX(0.9773);transform-origin:0 0;">Quantidade de operações | Furos | Rasgos |</div>
<div style="position:absolute;left:335px;top:546px;width:857px;height:1px;background:#d5e3f5"></div>
<div style="position:absolute;left:335px;top:546px;width:1px;height:24px;background:#d5e3f5"></div>
<div style="position:absolute;left:768px;top:546px;width:1px;height:23px;background:#d5e3f5"></div>
<div style="position:absolute;left:338.5px;top:551.77px;font-size:11.3px;line-height:12.622px;color:#000;white-space:nowrap;transform:scaleX(0.9970);transform-origin:0 0;">Cabeçote a ser priorizado</div>
<div style="position:absolute;left:771.5px;top:551.77px;font-size:11.3px;line-height:12.622px;color:#000;white-space:nowrap;">Superior</div>
<div style="position:absolute;left:335px;top:569px;width:857px;height:1px;background:#d5e3f5"></div>
<div style="position:absolute;left:335px;top:569px;width:1px;height:24px;background:#d5e3f5"></div>
<div style="position:absolute;left:768px;top:569px;width:1px;height:23px;background:#d5e3f5"></div>
<div style="position:absolute;left:338.5px;top:574.77px;font-size:11.3px;line-height:12.622px;color:#000;white-space:nowrap;transform:scaleX(0.9610);transform-origin:0 0;">Selecione o(s) cabeçote(s)</div>
<div style="position:absolute;left:771.5px;top:574.77px;font-size:11.3px;line-height:12.622px;color:#000;white-space:nowrap;transform:scaleX(0.9777);transform-origin:0 0;">Ambos</div>
<div style="position:absolute;left:335px;top:592px;width:857px;height:1px;background:#d5e3f5"></div>
<div style="position:absolute;left:335px;top:592px;width:1px;height:24px;background:#d5e3f5"></div>
<div style="position:absolute;left:768px;top:592px;width:1px;height:23px;background:#d5e3f5"></div>
<div style="position:absolute;left:338.5px;top:597.77px;font-size:11.3px;line-height:12.622px;color:#000;white-space:nowrap;transform:scaleX(0.9867);transform-origin:0 0;">Ferramenta de rasgo</div>
<div style="position:absolute;left:771.5px;top:597.77px;font-size:11.3px;line-height:12.622px;color:#000;white-space:nowrap;transform:scaleX(0.8604);transform-origin:0 0;">1 - FRESA_SUP; 2 - FRESA_INF;</div>
<div style="position:absolute;left:335px;top:615px;width:857px;height:1px;background:#d5e3f5"></div>
<div style="position:absolute;left:335px;top:615px;width:1px;height:24px;background:#d5e3f5"></div>
<div style="position:absolute;left:768px;top:615px;width:1px;height:23px;background:#d5e3f5"></div>
<div style="position:absolute;left:338.5px;top:620.77px;font-size:11.3px;line-height:12.622px;color:#000;white-space:nowrap;transform:scaleX(0.9772);transform-origin:0 0;">Ordem das Operações</div>
<div style="position:absolute;left:771.5px;top:620.77px;font-size:11.3px;line-height:12.622px;color:#000;white-space:nowrap;transform:scaleX(0.9559);transform-origin:0 0;">Furos | Rasgos |</div>
<div style="position:absolute;left:335px;top:638px;width:857px;height:1px;background:#d5e3f5"></div>
<div style="position:absolute;left:316px;top:639px;width:876px;height:1px;background:#ffffff"></div>
<div style="position:absolute;left:317px;top:640px;width:874px;height:20px;background:#d4e4f9"></div>
<svg style="left:322px;top:646px" width="8" height="6" viewBox="0 0 8 6"><path d="M0.4 5.2 L3.75 1.9 L7.1 5.2" fill="none" stroke="#0f2a5c" stroke-width="1.9" stroke-linecap="butt" stroke-linejoin="miter"/></svg>
<div style="position:absolute;left:338.5px;top:643.77px;font-size:11.3px;line-height:12.622px;color:#111;white-space:nowrap;transform:scaleX(0.9432);transform-origin:0 0;">Especificações técnicas</div>
<div style="position:absolute;left:335px;top:661px;width:857px;height:1px;background:#d5e3f5"></div>
<div style="position:absolute;left:335px;top:661px;width:1px;height:24px;background:#d5e3f5"></div>
<div style="position:absolute;left:768px;top:661px;width:1px;height:23px;background:#d5e3f5"></div>
<div style="position:absolute;left:338.5px;top:666.77px;font-size:11.3px;line-height:12.622px;color:#000;white-space:nowrap;transform:scaleX(1.0223);transform-origin:0 0;">Comprimento mínimo (X)</div>
<div style="position:absolute;left:771.5px;top:666.77px;font-size:11.3px;line-height:12.622px;color:#000;white-space:nowrap;transform:scaleX(0.9550);transform-origin:0 0;">200</div>
<div style="position:absolute;left:335px;top:684px;width:857px;height:1px;background:#d5e3f5"></div>
<div style="position:absolute;left:335px;top:684px;width:1px;height:24px;background:#d5e3f5"></div>
<div style="position:absolute;left:768px;top:684px;width:1px;height:23px;background:#d5e3f5"></div>
<div style="position:absolute;left:338.5px;top:689.77px;font-size:11.3px;line-height:12.622px;color:#000;white-space:nowrap;transform:scaleX(0.9467);transform-origin:0 0;">Espessura máxima (Z)</div>
<div style="position:absolute;left:771.5px;top:689.77px;font-size:11.3px;line-height:12.622px;color:#000;white-space:nowrap;transform:scaleX(0.9550);transform-origin:0 0;">50</div>
<div style="position:absolute;left:335px;top:707px;width:857px;height:1px;background:#d5e3f5"></div>
<div style="position:absolute;left:335px;top:707px;width:1px;height:24px;background:#d5e3f5"></div>
<div style="position:absolute;left:768px;top:707px;width:1px;height:23px;background:#d5e3f5"></div>
<div style="position:absolute;left:338.5px;top:712.77px;font-size:11.3px;line-height:12.622px;color:#000;white-space:nowrap;transform:scaleX(0.9566);transform-origin:0 0;">Espessura mínima (Z)</div>
<div style="position:absolute;left:771.5px;top:712.77px;font-size:11.3px;line-height:12.622px;color:#000;white-space:nowrap;transform:scaleX(0.9550);transform-origin:0 0;">10</div>
<div style="position:absolute;left:335px;top:730px;width:857px;height:1px;background:#d5e3f5"></div>
<div style="position:absolute;left:335px;top:730px;width:1px;height:24px;background:#d5e3f5"></div>
<div style="position:absolute;left:768px;top:730px;width:1px;height:23px;background:#d5e3f5"></div>
<div style="position:absolute;left:338.5px;top:735.77px;font-size:11.3px;line-height:12.622px;color:#000;white-space:nowrap;transform:scaleX(0.9648);transform-origin:0 0;">Largura mínima (Y)</div>
<div style="position:absolute;left:771.5px;top:735.77px;font-size:11.3px;line-height:12.622px;color:#000;white-space:nowrap;transform:scaleX(0.9550);transform-origin:0 0;">70</div>
<div style="position:absolute;left:335px;top:753px;width:857px;height:1px;background:#d5e3f5"></div>
<div style="position:absolute;left:335px;top:753px;width:1px;height:25px;background:#d5e3f5"></div>
<div style="position:absolute;left:768px;top:753px;width:1px;height:24px;background:#d5e3f5"></div>
<div style="position:absolute;left:338.5px;top:758.77px;font-size:11.3px;line-height:12.622px;color:#000;white-space:nowrap;transform:scaleX(0.9953);transform-origin:0 0;">Número de brocas horizontais (X)</div>
<div style="position:absolute;left:771.5px;top:758.77px;font-size:11.3px;line-height:12.622px;color:#000;white-space:nowrap;transform:scaleX(0.9550);transform-origin:0 0;">2</div>
<div style="position:absolute;left:336px;top:777px;width:856px;height:24px;background:linear-gradient(#fde8c2 0,#fde8c2 1px,#ffffff 1px,#ffffff 2px,#fff9d9 2px,#fff9d9 calc(100% - 2px),#ffffff calc(100% - 2px),#ffffff calc(100% - 1px),#fde8c2 calc(100% - 1px))"></div>
<div style="position:absolute;left:335px;top:777px;width:1px;height:24px;background:#d5e3f5"></div>
<div style="position:absolute;left:768px;top:777px;width:1px;height:23px;background:#d5e3f5"></div>
<div style="position:absolute;left:338.5px;top:782.77px;font-size:11.3px;line-height:12.622px;color:#000;white-space:nowrap;transform:scaleX(0.9867);transform-origin:0 0;">Número de brocas laterais (Y)</div>
<div style="position:absolute;left:771.5px;top:782.77px;font-size:11.3px;line-height:12.622px;color:#000;white-space:nowrap;transform:scaleX(0.9550);transform-origin:0 0;">3</div>
<div style="position:absolute;left:335px;top:800px;width:1px;height:24px;background:#d5e3f5"></div>
<div style="position:absolute;left:768px;top:800px;width:1px;height:23px;background:#d5e3f5"></div>
<div style="position:absolute;left:338.5px;top:805.77px;font-size:11.3px;line-height:12.622px;color:#000;white-space:nowrap;transform:scaleX(0.9819);transform-origin:0 0;">Número de brocas verticais (Z)</div>
<div style="position:absolute;left:771.5px;top:805.77px;font-size:11.3px;line-height:12.622px;color:#000;white-space:nowrap;transform:scaleX(0.9550);transform-origin:0 0;">14</div>
<div style="position:absolute;left:335px;top:823px;width:857px;height:1px;background:#d5e3f5"></div>
<div style="position:absolute;left:316px;top:824px;width:876px;height:1px;background:#ffffff"></div>
<div style="position:absolute;left:317px;top:825px;width:874px;height:20px;background:#d4e4f9"></div>
<svg style="left:322px;top:831px" width="8" height="6" viewBox="0 0 8 6"><path d="M0.4 5.2 L3.75 1.9 L7.1 5.2" fill="none" stroke="#0f2a5c" stroke-width="1.9" stroke-linecap="butt" stroke-linejoin="miter"/></svg>
<div style="position:absolute;left:338.5px;top:828.77px;font-size:11.3px;line-height:12.622px;color:#111;white-space:nowrap;transform:scaleX(0.8814);transform-origin:0 0;">Furos</div>
<div style="position:absolute;left:335px;top:846px;width:857px;height:1px;background:#d5e3f5"></div>
<div style="position:absolute;left:335px;top:846px;width:1px;height:24px;background:#d5e3f5"></div>
<div style="position:absolute;left:768px;top:846px;width:1px;height:23px;background:#d5e3f5"></div>
<div style="position:absolute;left:338.5px;top:851.77px;font-size:11.3px;line-height:12.622px;color:#000;white-space:nowrap;transform:scaleX(1.0036);transform-origin:0 0;">Ângulo da extremidade da broca para furação passante</div>
<div style="position:absolute;left:771.5px;top:851.77px;font-size:11.3px;line-height:12.622px;color:#000;white-space:nowrap;transform:scaleX(0.9550);transform-origin:0 0;">60</div>
<div style="position:absolute;left:335px;top:869px;width:857px;height:1px;background:#d5e3f5"></div>
<div style="position:absolute;left:335px;top:869px;width:1px;height:24px;background:#d5e3f5"></div>
<div style="position:absolute;left:768px;top:869px;width:1px;height:23px;background:#d5e3f5"></div>
<div style="position:absolute;left:338.5px;top:874.77px;font-size:11.3px;line-height:12.622px;color:#000;white-space:nowrap;transform:scaleX(0.9914);transform-origin:0 0;">Folga da broca na furação passante (mm)</div>
<div style="position:absolute;left:771.5px;top:874.77px;font-size:11.3px;line-height:12.622px;color:#000;white-space:nowrap;transform:scaleX(0.9550);transform-origin:0 0;">1</div>
<div style="position:absolute;left:335px;top:892px;width:857px;height:1px;background:#d5e3f5"></div>
<div style="position:absolute;left:335px;top:892px;width:1px;height:24px;background:#d5e3f5"></div>
<div style="position:absolute;left:768px;top:892px;width:1px;height:23px;background:#d5e3f5"></div>
<div style="position:absolute;left:338.5px;top:897.77px;font-size:11.3px;line-height:12.622px;color:#000;white-space:nowrap;transform:scaleX(1.0236);transform-origin:0 0;">Diâmetro horizontal máximo (mm)</div>
<div style="position:absolute;left:771.5px;top:897.77px;font-size:11.3px;line-height:12.622px;color:#000;white-space:nowrap;transform:scaleX(0.9550);transform-origin:0 0;">12</div>
<div style="position:absolute;left:335px;top:915px;width:857px;height:1px;background:#d5e3f5"></div>
<div style="position:absolute;left:335px;top:915px;width:1px;height:24px;background:#d5e3f5"></div>
<div style="position:absolute;left:768px;top:915px;width:1px;height:23px;background:#d5e3f5"></div>
<div style="position:absolute;left:338.5px;top:920.77px;font-size:11.3px;line-height:12.622px;color:#000;white-space:nowrap;transform:scaleX(1.0192);transform-origin:0 0;">Diâmetro vertical máximo (mm)</div>
<div style="position:absolute;left:771.5px;top:920.77px;font-size:11.3px;line-height:12.622px;color:#000;white-space:nowrap;transform:scaleX(0.9550);transform-origin:0 0;">35</div>
<div style="position:absolute;left:335px;top:938px;width:857px;height:1px;background:#d5e3f5"></div>
<div style="position:absolute;left:335px;top:938px;width:1px;height:24px;background:#d5e3f5"></div>
<div style="position:absolute;left:768px;top:938px;width:1px;height:23px;background:#d5e3f5"></div>
<div style="position:absolute;left:338.5px;top:943.77px;font-size:11.3px;line-height:12.622px;color:#000;white-space:nowrap;transform:scaleX(1.0039);transform-origin:0 0;">Modo de furação não passante</div>
<div style="position:absolute;left:771.5px;top:943.77px;font-size:11.3px;line-height:12.622px;color:#000;white-space:nowrap;transform:scaleX(0.9913);transform-origin:0 0;">Lento-Rápido</div>
<div style="position:absolute;left:335px;top:961px;width:857px;height:1px;background:#d5e3f5"></div>
<div style="position:absolute;left:335px;top:961px;width:1px;height:24px;background:#d5e3f5"></div>
<div style="position:absolute;left:768px;top:961px;width:1px;height:23px;background:#d5e3f5"></div>
<div style="position:absolute;left:338.5px;top:966.77px;font-size:11.3px;line-height:12.622px;color:#000;white-space:nowrap;transform:scaleX(0.9970);transform-origin:0 0;">Modo de furação passante</div>
<div style="position:absolute;left:771.5px;top:966.77px;font-size:11.3px;line-height:12.622px;color:#000;white-space:nowrap;transform:scaleX(0.9940);transform-origin:0 0;">Lento-Rápido-Lento</div>
<div style="position:absolute;left:335px;top:984px;width:857px;height:1px;background:#d5e3f5"></div>
<div style="position:absolute;left:335px;top:984px;width:1px;height:24px;background:#d5e3f5"></div>
<div style="position:absolute;left:768px;top:984px;width:1px;height:23px;background:#d5e3f5"></div>
<div style="position:absolute;left:338.5px;top:989.77px;font-size:11.3px;line-height:12.622px;color:#000;white-space:nowrap;transform:scaleX(0.9886);transform-origin:0 0;">Posição máxima de furação horizontal em (Y)</div>
<div style="position:absolute;left:771.5px;top:989.77px;font-size:11.3px;line-height:12.622px;color:#000;white-space:nowrap;transform:scaleX(0.9550);transform-origin:0 0;">1200</div>
<div style="position:absolute;left:335px;top:1007px;width:857px;height:1px;background:#d5e3f5"></div>
<div style="position:absolute;left:335px;top:1007px;width:1px;height:22px;background:#d5e3f5"></div>
<div style="position:absolute;left:768px;top:1007px;width:1px;height:21px;background:#d5e3f5"></div>
<div style="position:absolute;left:338.5px;top:1012.77px;font-size:11.3px;line-height:12.622px;color:#000;white-space:nowrap;transform:scaleX(0.9819);transform-origin:0 0;">Posição máxima de furação lateral em (Y)</div>
<div style="position:absolute;left:771.5px;top:1012.77px;font-size:11.3px;line-height:12.622px;color:#000;white-space:nowrap;transform:scaleX(0.9550);transform-origin:0 0;">1200</div>
<div style="position:absolute;left:335px;top:1028px;width:857px;height:1px;background:#d5e3f5"></div>
<div style="position:absolute;left:335px;top:1028px;width:1px;height:24px;background:#d5e3f5"></div>
<div style="position:absolute;left:768px;top:1028px;width:1px;height:23px;background:#d5e3f5"></div>
<div style="position:absolute;left:338.5px;top:1033.77px;font-size:11.3px;line-height:12.622px;color:#000;white-space:nowrap;transform:scaleX(0.9749);transform-origin:0 0;">Posição máxima de furação vertical em (Y)</div>
<div style="position:absolute;left:336px;top:1051px;width:856px;height:24px;background:linear-gradient(#fdb46a 0,#fdb46a 1px,#fde6b6 1px,#fde6b6 2px,#fddd9c 2px,#fbc86a calc(100% - 2px),#fde2b0 calc(100% - 2px),#fde2b0 calc(100% - 1px),#fdb46a calc(100% - 1px))"></div>
<div style="position:absolute;left:335px;top:1051px;width:1px;height:24px;background:#d5e3f5"></div>
<div style="position:absolute;left:768px;top:1051px;width:1px;height:23px;background:#d5e3f5"></div>
<div style="position:absolute;left:338.5px;top:1056.77px;font-size:11.3px;line-height:12.622px;color:#000;white-space:nowrap;">Posição máxima do centro dos furos horizontais oposta ao eixo Y da face inferior</div>
<div style="position:absolute;left:771.5px;top:1056.77px;font-size:11.3px;line-height:12.622px;color:#000;white-space:nowrap;transform:scaleX(0.9550);transform-origin:0 0;">9,5</div>
<div style="position:absolute;left:335px;top:1074px;width:1px;height:24px;background:#d5e3f5"></div>
<div style="position:absolute;left:768px;top:1074px;width:1px;height:23px;background:#d5e3f5"></div>
<div style="position:absolute;left:338.5px;top:1079.77px;font-size:11.3px;line-height:12.622px;color:#000;white-space:nowrap;">Posição mínima do centro dos furos horizontais oposta ao eixo Y da face inferior</div>
<div style="position:absolute;left:771.5px;top:1079.77px;font-size:11.3px;line-height:12.622px;color:#000;white-space:nowrap;transform:scaleX(0.9550);transform-origin:0 0;">0</div>
<div style="position:absolute;left:335px;top:1097px;width:857px;height:1px;background:#d5e3f5"></div>
<div style="position:absolute;left:335px;top:1097px;width:1px;height:24px;background:#d5e3f5"></div>
<div style="position:absolute;left:768px;top:1097px;width:1px;height:23px;background:#d5e3f5"></div>
<div style="position:absolute;left:338.5px;top:1102.77px;font-size:11.3px;line-height:12.622px;color:#000;white-space:nowrap;transform:scaleX(0.9952);transform-origin:0 0;">Profundidade máxima da furação</div>
<div style="position:absolute;left:771.5px;top:1102.77px;font-size:11.3px;line-height:12.622px;color:#000;white-space:nowrap;transform:scaleX(0.9550);transform-origin:0 0;">60</div>
<div style="position:absolute;left:335px;top:1120px;width:857px;height:1px;background:#d5e3f5"></div>
<div style="position:absolute;left:316px;top:1121px;width:876px;height:1px;background:#ffffff"></div>
<div style="position:absolute;left:317px;top:1122px;width:874px;height:20px;background:#d4e4f9"></div>
<svg style="left:322px;top:1128px" width="8" height="6" viewBox="0 0 8 6"><path d="M0.4 5.2 L3.75 1.9 L7.1 5.2" fill="none" stroke="#0f2a5c" stroke-width="1.9" stroke-linecap="butt" stroke-linejoin="miter"/></svg>
<div style="position:absolute;left:338.5px;top:1125.77px;font-size:11.3px;line-height:12.622px;color:#111;white-space:nowrap;transform:scaleX(0.9535);transform-origin:0 0;">Rasgos</div>
<div style="position:absolute;left:335px;top:1143px;width:857px;height:1px;background:#d5e3f5"></div>
<div style="position:absolute;left:335px;top:1143px;width:1px;height:24px;background:#d5e3f5"></div>
<div style="position:absolute;left:768px;top:1143px;width:1px;height:23px;background:#d5e3f5"></div>
<div style="position:absolute;left:338.5px;top:1148.77px;font-size:11.3px;line-height:12.622px;color:#000;white-space:nowrap;transform:scaleX(0.9865);transform-origin:0 0;">Ajustar tamanho dos rasgos de acordo com as fresas</div>
<svg style="left:772px;top:1148px" width="13" height="13" viewBox="0 0 13 13">
<defs><linearGradient id="cbg7721148" x1="0" y1="0" x2="1" y2="1"><stop offset="0" stop-color="#dfe3ee"/><stop offset="1" stop-color="#f3f4f9"/></linearGradient></defs>
<rect x="0.5" y="0.5" width="12" height="12" rx="0.6" fill="#ffffff" stroke="#1f5590" stroke-width="1.1"/>
<rect x="2" y="2" width="9" height="9" fill="url(#cbg7721148)"/>
<path d="M4.4 6.4 L6 9.2 L9.6 4.6" fill="none" stroke="#3aaa35" stroke-width="2" stroke-linecap="round" stroke-linejoin="round"/></svg>
<div style="position:absolute;left:335px;top:1166px;width:857px;height:1px;background:#d5e3f5"></div>
<div style="position:absolute;left:335px;top:1166px;width:1px;height:20px;background:#d5e3f5"></div>
<div style="position:absolute;left:768px;top:1166px;width:1px;height:20px;background:#d5e3f5"></div>
<div style="position:absolute;left:338.5px;top:1171.77px;font-size:11.3px;line-height:12.622px;color:#000;white-space:nowrap;transform:scaleX(0.9888);transform-origin:0 0;">Ajustar tamanho dos rasgos de acordo com as serras</div>
<svg style="left:772px;top:1171px" width="13" height="13" viewBox="0 0 13 13">
<defs><linearGradient id="cbg7721171" x1="0" y1="0" x2="1" y2="1"><stop offset="0" stop-color="#dfe3ee"/><stop offset="1" stop-color="#f3f4f9"/></linearGradient></defs>
<rect x="0.5" y="0.5" width="12" height="12" rx="0.6" fill="#ffffff" stroke="#1f5590" stroke-width="1.1"/>
<rect x="2" y="2" width="9" height="9" fill="url(#cbg7721171)"/>
</svg>
<div style="position:absolute;left:1192px;top:110px;width:19px;height:1061px;background:#cfdff4;border-left:1px solid #c4d6ee;border-right:1px solid #c4d6ee"></div>
<div style="position:absolute;left:1193px;top:108px;width:17px;height:2px;background:linear-gradient(#dfe9f6,#f0f5fb)"></div>
<svg style="left:1198px;top:114px" width="8" height="6" viewBox="0 0 8 6"><path d="M0 5 L3.75 0.5 L7.5 5 Z" fill="#434d6b"/></svg>
<div style="position:absolute;left:1193px;top:770px;width:17px;height:384px;border:1px solid #7b9abf;border-radius:2px;background:linear-gradient(90deg,#ffffff 0,#ffffff 1px,#e8eff9 1px,#e8eff9 7px,#d8e5f5 7px,#d8e5f5 14px,#ffffff 14px)"></div>
<div style="position:absolute;left:1197px;top:862px;width:8px;height:1px;background:#6f8fbf"></div>
<div style="position:absolute;left:1197px;top:864px;width:8px;height:1px;background:#6f8fbf"></div>
<div style="position:absolute;left:1197px;top:866px;width:8px;height:1px;background:#6f8fbf"></div>
<svg style="left:1198px;top:1159px" width="8" height="6" viewBox="0 0 8 6"><path d="M0 0.5 L3.75 5 L7.5 0.5 Z" fill="#434d6b"/></svg>
<div style="position:absolute;left:1192px;top:291px;width:31px;height:1px;background:#ffffff"></div>
<div style="position:absolute;left:1222px;top:292px;width:1px;height:139px;background:#c6c2be"></div>
<div style="position:absolute;left:1192px;top:1171px;width:19px;height:6px;background:#b4cbe7;border:1px solid #6a96d0;border-left:none"></div>
</body></html>
